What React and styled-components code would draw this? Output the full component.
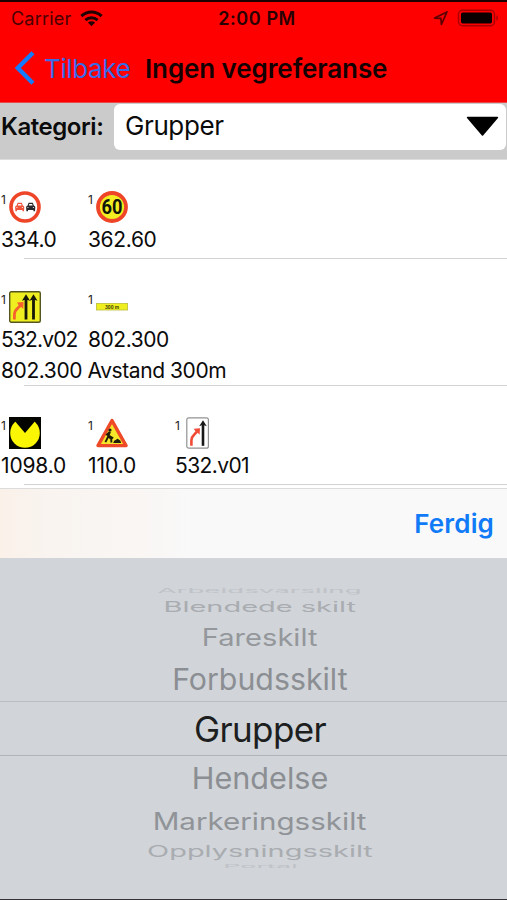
import React from 'react';
import styled, { createGlobalStyle } from 'styled-components';

const GlobalStyle = createGlobalStyle`
  *, *::before, *::after { box-sizing: border-box; }
  body { margin: 0; background: #fff; }
`;

const Screen = styled.main`
  display: flex;
  flex-direction: column;
  width: 507px;
  height: 900px;
  overflow: hidden;
  background: #fff;
  color: #0b0b0b;
  font-family: Inter, 'Liberation Sans', sans-serif;
  white-space: nowrap;
`;

const Header = styled.header`
  flex: none;
  height: 103px;
  background: #fe0000;
  border-top: 2px solid #1c0000;
  border-bottom: 1px solid #e84a4a;
`;

const StatusBar = styled.div`
  display: grid;
  grid-template-columns: 1fr auto 1fr;
  align-items: center;
  height: 32px;
  padding: 0 8px 0 11px;
  font-size: 18px;
  color: #2a0000;
`;

const Carrier = styled.div`
  display: flex;
  align-items: center;
  gap: 9px;
  letter-spacing: 0.2px;
  color: #4a0000;
`;

const Clock = styled.div`
  font-weight: 600;
  letter-spacing: 0.6px;
  padding-left: 4px;
`;

const StatusIcons = styled.div`
  display: flex;
  justify-content: flex-end;
  align-items: center;
  gap: 9px;
`;

const NavBar = styled.nav`
  display: flex;
  align-items: center;
  height: 68px;
  padding-left: 14px;
`;

const BackButton = styled.button`
  display: flex;
  align-items: center;
  gap: 9px;
  width: 131px;
  padding: 0;
  border: 0;
  background: none;
  color: #3a6be6;
  font: 400 26px Inter, sans-serif;
  letter-spacing: -0.4px;
`;

const Title = styled.h1`
  margin: 0;
  font-size: 26px;
  font-weight: 600;
  letter-spacing: -0.1px;
  color: #140000;
`;

const FilterBar = styled.div`
  flex: none;
  display: flex;
  height: 57px;
  padding: 1px 1px 9px 0;
  background: #cbcbcb;
  border-bottom: 1px solid #dedede;
`;

const FilterLabel = styled.label`
  display: flex;
  align-items: center;
  width: 114px;
  padding: 0 0 2px 1px;
  font-size: 24px;
  font-weight: 600;
  letter-spacing: -0.45px;
`;

const SelectField = styled.div`
  flex: 1;
  display: flex;
  align-items: center;
  justify-content: space-between;
  height: 46px;
  padding: 0 7px 3px 11px;
  border-radius: 6px;
  background: #fff;
  font-size: 26px;
  letter-spacing: -0.4px;
`;

const GroupList = styled.section`
  flex: none;
  height: 328px;
`;

const Group = styled.article`
  padding-top: ${(p) => p.$top}px;
  padding-bottom: ${(p) => p.$bottom}px;
  border-bottom: 1px solid;
  border-image: linear-gradient(to right, transparent 25px, #d2d2d4 25px) 1;
`;

const Signs = styled.div`
  display: flex;
`;

const Sign = styled.figure`
  width: 87px;
  margin: 0;
`;

const SignPicture = styled.div`
  display: grid;
  grid-template-columns: ${(p) => (p.$narrow ? 12 : 8.5)}px 32px;
  height: 32px;
`;

const Count = styled.span`
  padding-left: 1px;
  font-size: 12px;
  line-height: 17px;
  color: #222;
`;

const Label = styled.figcaption`
  height: 31px;
  padding-left: 1px;
  font-size: 21px;
  line-height: 33px;
  letter-spacing: ${(p) => p.$tracking}px;
`;

const GroupNote = styled(Label).attrs({ as: 'p' })`
  margin: 0;
`;

const PickerToolbar = styled.div`
  flex: none;
  display: flex;
  align-items: center;
  justify-content: flex-end;
  height: 70px;
  padding-right: 13px;
  border-top: 1px solid #dcdcdc;
  background: linear-gradient(to right, #faf1e9 0, #f9f4f0 50px, #f9f6f4 140px, #f9f9f9 190px);
`;

const DoneButton = styled.button`
  padding: 0;
  border: 0;
  background: none;
  color: #117bf7;
  font: 600 26px Inter, sans-serif;
  letter-spacing: 0.15px;
`;

const Wheel = styled.div`
  flex: 1;
  display: flex;
  flex-direction: column;
  padding-top: 26px;
  background: linear-gradient(to right, #d1d5d9, #d1d4d9);
  border-bottom: 1px solid #343438;
`;

const WheelRow = styled.div`
  flex: none;
  display: flex;
  align-items: center;
  justify-content: center;
  height: ${(p) => p.$height}px;
  padding-left: 13px;
  font-size: 30px;
  line-height: 1;
  color: ${(p) => p.$color};
`;

const SelectedRow = styled(WheelRow)`
  padding-top: 2px;
  border-top: 1px solid #b9bdc5;
  border-bottom: 1px solid #b0b3b9;
  font-size: 35px;
  letter-spacing: -0.6px;
`;

const WheelText = styled.span`
  transform: scale(${(p) => p.$x}, ${(p) => p.$y});
`;

const WifiIcon = () => (
  <svg width="23" height="17" viewBox="0 0 23 17" fill="none" stroke="#200000" strokeWidth="3">
    <path d="M1.4 6.2C7.2.7 15.8.7 21.6 6.2" />
    <path d="M5.4 10.1C8.9 6.9 14.1 6.9 17.6 10.1" />
    <path d="M11.5 16.2 7.9 12.5C10 10.7 13 10.7 15.1 12.5Z" fill="#200000" stroke="none" />
  </svg>
);

const LocationIcon = () => (
  <svg width="15" height="15" viewBox="0 0 15 15" fill="none" stroke="#5c0000" strokeWidth="1.7" strokeLinejoin="round">
    <path d="M14 .9 1.6 7.1 7.9 7.4 8.4 13.5Z" />
  </svg>
);

const BatteryIcon = () => (
  <svg width="42" height="18" viewBox="0 0 42 18">
    <rect x="1.5" y="1.2" width="36" height="15.6" rx="4" fill="none" stroke="#a80000" strokeWidth="1.4" />
    <rect x="4" y="3.6" width="31" height="10.8" rx="1.6" fill="#0b0000" />
    <path d="M39.4 6.3C41.5 7.3 41.5 10.7 39.4 11.7Z" fill="#a80000" />
  </svg>
);

const BackChevron = () => (
  <svg width="21" height="34" viewBox="0 0 21 34" fill="none" stroke="#147bff" strokeWidth="4.4">
    <path d="M19 1.8 3.8 17 19 32.2" />
  </svg>
);

const DropTriangle = () => (
  <svg width="33" height="20" viewBox="0 0 33 20">
    <path d="M1.6 1.6H31.4L16.5 19Z" fill="#000" stroke="#000" strokeWidth="1.6" strokeLinejoin="round" />
  </svg>
);

const Car = ({ color, x }) => (
  <g transform={`translate(${x} 11.2)`} fill={color}>
    <path fillRule="evenodd" d="M1.4 3.3 2.4.5H6.6L7.6 3.3Q9.2 3.8 9.1 5.1L8.8 9H7.2V7.7H1.8V9H.2L-.1 5.1Q-.2 3.8 1.4 3.3ZM2.6 3.2H6.4L5.9 1.7H3.1Z" />
    <path d="M1.2 4.9H2.3V5.7H1.2ZM6.7 4.9H7.8V5.7H6.7Z" fill="#fff" opacity=".8" />
  </g>
);

const NoOvertakingSign = () => (
  <svg width="32" height="32" viewBox="0 0 32 32">
    <circle cx="16" cy="16" r="14" fill="#fff" stroke="#ee4427" strokeWidth="3.6" />
    <Car color="#f0543a" x={6.2} />
    <Car color="#28282a" x={17.2} />
  </svg>
);

const SpeedSign = () => (
  <svg width="32" height="32" viewBox="0 0 32 32">
    <circle cx="16" cy="16" r="14" fill="#f2ee22" stroke="#ee4427" strokeWidth="3.8" />
    <text x="16" y="22.8" textAnchor="middle" textLength="21" lengthAdjust="spacingAndGlyphs" fontFamily="Roboto, sans-serif" fontWeight="700" fontSize="19.5" fill="#10140a">60</text>
  </svg>
);

const LaneChangeSign = () => (
  <svg width="32" height="32" viewBox="0 0 32 32">
    <rect x=".7" y=".7" width="30.6" height="30.6" rx="1.5" fill="#eeee20" stroke="#55551f" strokeWidth="1.4" />
    <path d="M5.4 28.5V23.5Q5.6 19.5 9 16.8L11.5 14.6" fill="none" stroke="#f5622d" strokeWidth="2.8" />
    <path d="M8 11.6 14.6 11 14.2 18 12 15.8 10 14.8Z" fill="#f5622d" />
    <path d="M17 28.5V7M24.5 28.5V7" stroke="#17170a" strokeWidth="2.8" />
    <path d="M13 9.8 17 3.2 21 9.8 17 8.4ZM20.5 9.8 24.5 3.2 28.5 9.8 24.5 8.4Z" fill="#17170a" />
  </svg>
);

const DistanceSign = () => (
  <svg width="32" height="32" viewBox="0 0 32 32">
    <rect x=".4" y="12.4" width="31.2" height="6.6" fill="#efef20" stroke="#bcbc3b" strokeWidth=".8" />
    <text x="16" y="17.7" textAnchor="middle" textLength="14" lengthAdjust="spacingAndGlyphs" fontFamily="Roboto, sans-serif" fontWeight="700" fontSize="5.4" fill="#45450c">300 m</text>
  </svg>
);

const FlashingLightSign = () => (
  <svg width="32" height="32" viewBox="0 0 32 32">
    <rect width="32" height="32" fill="#050500" />
    <circle cx="16" cy="16" r="14.8" fill="#fbf704" />
    <path d="M16 16 6.2 4.4Q16-3.4 25.8 4.4Z" fill="#050500" />
  </svg>
);

const RoadworkSign = () => (
  <svg width="32" height="32" viewBox="0 0 32 32">
    <path d="M16 3.6 30 28.6H2Z" fill="#f6e62a" stroke="#ee4a28" strokeWidth="3.4" strokeLinejoin="round" />
    <circle cx="14" cy="13" r="1.6" fill="#211d08" />
    <path d="M14 14.6 12 20 9.4 25.2M12.5 19.5 15.3 22V25.5M13.5 15.2 11 17.5 17.2 21.3" fill="none" stroke="#211d08" strokeWidth="1.9" />
    <path d="M17.2 26Q18 22.5 20 23Q21.3 20.6 22.7 22.6Q24.6 22.8 25.2 26Z" fill="#211d08" />
  </svg>
);

const MergeSign = () => (
  <svg width="24" height="32" viewBox="0 0 24 32">
    <rect x=".8" y=".8" width="21.6" height="30.4" rx="2" fill="#fff" stroke="#929292" strokeWidth="1.2" />
    <path d="M5.4 28.8V23.5Q5.6 19.8 8.5 17.2L11.5 14.2" fill="none" stroke="#f04c36" strokeWidth="2.6" />
    <path d="M7.8 11.8 14 11.2 13.6 17.8 11.5 15.6 9.6 14.4Z" fill="#f04c36" />
    <path d="M17 28.8V7" stroke="#18181a" strokeWidth="2.6" />
    <path d="M13.2 9.3 17 3.2 20.8 9.3 17 7.8Z" fill="#18181a" />
  </svg>
);

const groups = [
  {
    top: 31,
    bottom: 4,
    signs: [
      { code: '334.0', Icon: NoOvertakingSign, tracking: -0.45 },
      { code: '362.60', Icon: SpeedSign, tracking: -0.35 },
    ],
  },
  {
    top: 32,
    bottom: 0,
    note: '802.300 Avstand 300m',
    signs: [
      { code: '532.v02', Icon: LaneChangeSign, tracking: -0.85 },
      { code: '802.300', Icon: DistanceSign, tracking: -0.45 },
    ],
  },
  {
    top: 31,
    bottom: 4,
    signs: [
      { code: '1098.0', Icon: FlashingLightSign, tracking: -0.15 },
      { code: '110.0', Icon: RoadworkSign, tracking: -0.05 },
      { code: '532.v01', Icon: MergeSign, tracking: -0.6, narrow: true },
    ],
  },
];

const categories = [
  { name: 'Arbeidsvarsling', height: 13, x: 0.924, y: 0.2, color: '#bfc2c7' },
  { name: 'Blendede skilt', height: 19, x: 0.965, y: 0.49, color: '#a9acb0' },
  { name: 'Fareskilt', height: 41, x: 0.97, y: 0.79, color: '#94979b' },
  { name: 'Forbudsskilt', height: 44, x: 1.01, y: 1, color: '#8b8e92' },
  { name: 'Grupper', height: 55, x: 1, y: 1, color: '#1c1e20', selected: true },
  { name: 'Hendelse', height: 44, x: 1.02, y: 1, color: '#8b8e92' },
  { name: 'Markeringsskilt', height: 42, x: 0.985, y: 0.79, color: '#909397' },
  { name: 'Opplysningsskilt', height: 18, x: 0.966, y: 0.51, color: '#a9acb0' },
  { name: 'Portal', height: 12, x: 0.9, y: 0.16, color: '#bfc2c7' },
];

export default function App() {
  return (
    <Screen>
      <GlobalStyle />
      <Header>
        <StatusBar>
          <Carrier>
            Carrier
            <WifiIcon />
          </Carrier>
          <Clock>2:00 PM</Clock>
          <StatusIcons>
            <LocationIcon />
            <BatteryIcon />
          </StatusIcons>
        </StatusBar>
        <NavBar>
          <BackButton>
            <BackChevron />
            Tilbake
          </BackButton>
          <Title>Ingen vegreferanse</Title>
        </NavBar>
      </Header>
      <FilterBar>
        <FilterLabel>Kategori:</FilterLabel>
        <SelectField>
          Grupper
          <DropTriangle />
        </SelectField>
      </FilterBar>
      <GroupList>
        {groups.map((group) => (
          <Group key={group.signs[0].code} $top={group.top} $bottom={group.bottom}>
            <Signs>
              {group.signs.map(({ code, Icon, tracking, narrow }) => (
                <Sign key={code}>
                  <SignPicture $narrow={narrow}>
                    <Count>1</Count>
                    <Icon />
                  </SignPicture>
                  <Label $tracking={tracking}>{code}</Label>
                </Sign>
              ))}
            </Signs>
            {group.note && <GroupNote $tracking={-0.42}>{group.note}</GroupNote>}
          </Group>
        ))}
      </GroupList>
      <PickerToolbar>
        <DoneButton>Ferdig</DoneButton>
      </PickerToolbar>
      <Wheel>
        {categories.map(({ name, height, x, y, color, selected }) => {
          const Row = selected ? SelectedRow : WheelRow;
          return (
            <Row key={name} $height={height} $color={color}>
              <WheelText $x={x} $y={y}>{name}</WheelText>
            </Row>
          );
        })}
      </Wheel>
    </Screen>
  );
}
